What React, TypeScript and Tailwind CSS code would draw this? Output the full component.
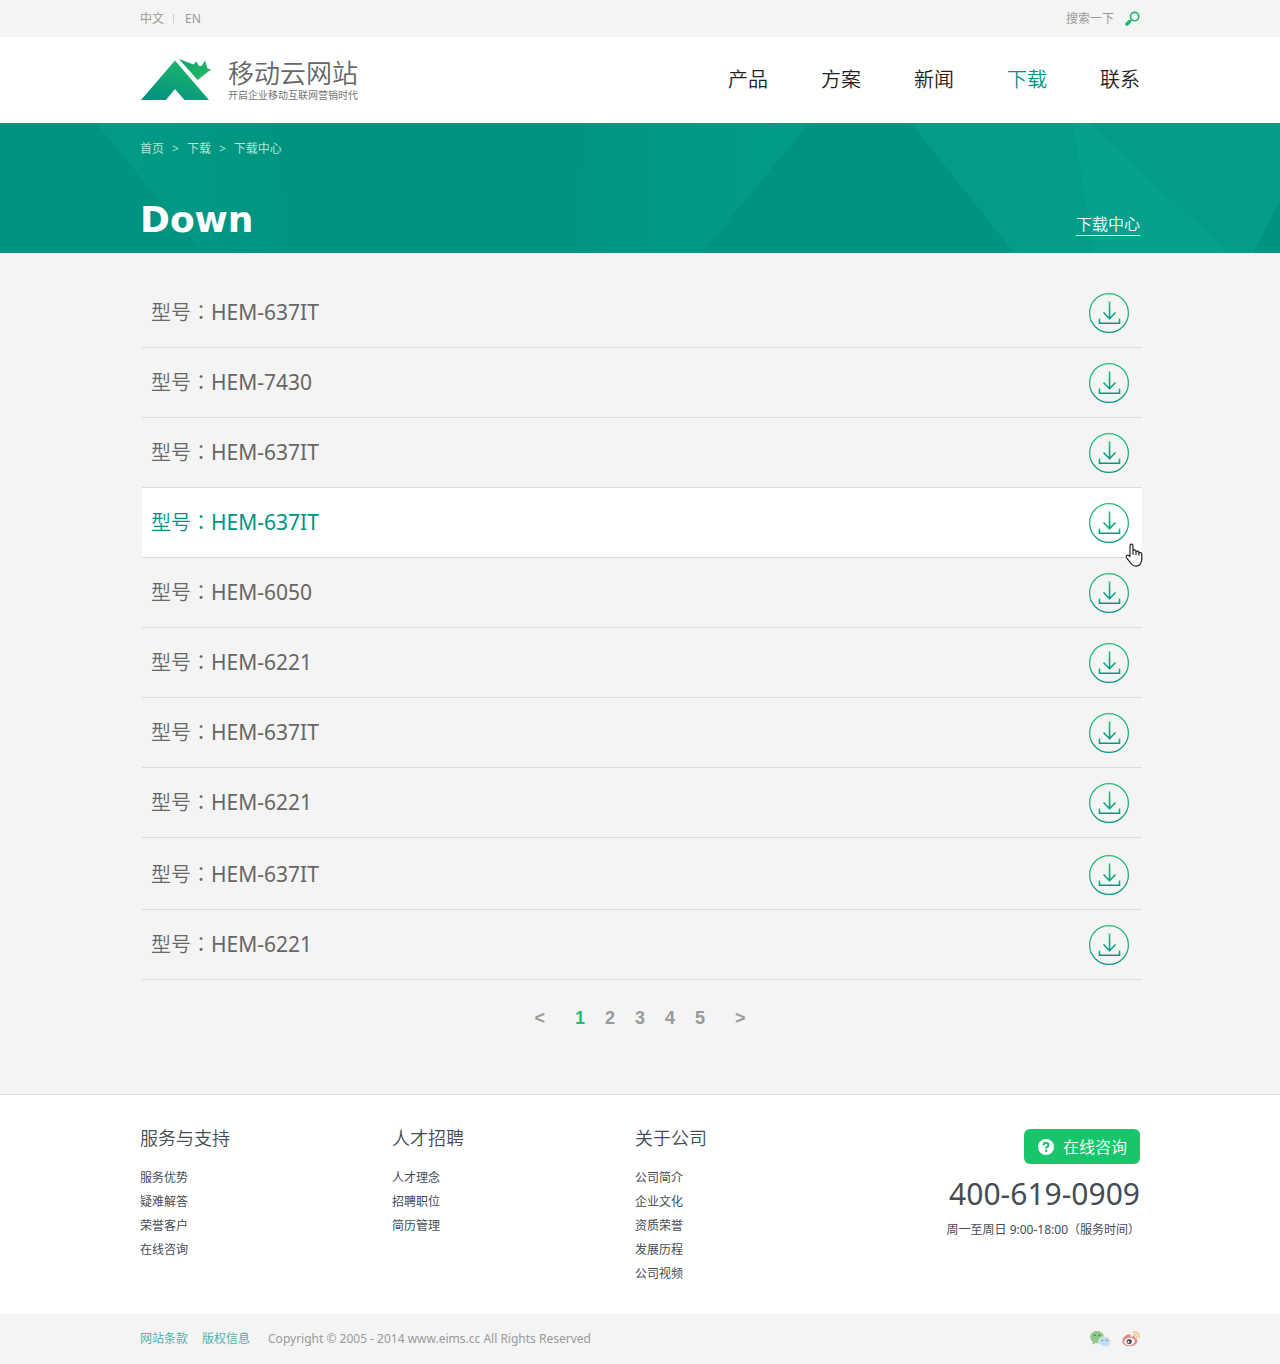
import { useState } from "react";

const navItems = ["产品", "方案", "新闻", "下载", "联系"];

const models = [
  "HEM-637IT",
  "HEM-7430",
  "HEM-637IT",
  "HEM-637IT",
  "HEM-6050",
  "HEM-6221",
  "HEM-637IT",
  "HEM-6221",
  "HEM-637IT",
  "HEM-6221",
];

const footerColumns = [
  { title: "服务与支持", links: ["服务优势", "疑难解答", "荣誉客户", "在线咨询"] },
  { title: "人才招聘", links: ["人才理念", "招聘职位", "简历管理"] },
  { title: "关于公司", links: ["公司简介", "企业文化", "资质荣誉", "发展历程", "公司视频"] },
];

function Logo() {
  return (
    <svg viewBox="0 0 72 44" className="h-11 w-[72px]" aria-hidden="true">
      <defs>
        <linearGradient id="peak" x1="0" y1="1" x2="0.6" y2="0">
          <stop offset="0.1" stopColor="#049180" />
          <stop offset="1" stopColor="#1db56c" />
        </linearGradient>
        <linearGradient id="crown" x1="0" y1="0" x2="1" y2="0.6">
          <stop offset="0" stopColor="#12a070" />
          <stop offset="1" stopColor="#22b962" />
        </linearGradient>
      </defs>
      <path d="M1 42 35 2.500 69 42H44.500L35 31 26 42Z" fill="url(#peak)" />
      <path
        d="M39 1 53.500 6.500 56.500 3.200 58.500 7.800 61.500 8 65 2.500 67.500 10.500 71 11.500 57.500 22Z"
        fill="url(#crown)"
      />
    </svg>
  );
}

function SearchIcon() {
  return (
    <svg viewBox="0 0 16 16" className="h-4 w-4" fill="none" stroke="#1fb86c" aria-hidden="true">
      <circle cx="10.600" cy="5.600" r="4.200" strokeWidth="1.600" />
      <path d="M7.600 8.700 5.800 10.400" strokeWidth="1.400" />
      <path d="M5.400 10.700 3 13" strokeWidth="3.600" strokeLinecap="round" />
    </svg>
  );
}

function BannerShapes() {
  return (
    <svg
      viewBox="0 0 1280 130"
      preserveAspectRatio="none"
      className="absolute inset-0 h-full w-full"
      aria-hidden="true"
    >
      <defs>
        <linearGradient id="fadeOut" x1="0" y1="0" x2="1" y2="0">
          <stop offset="0.2" stopColor="#009a85" />
          <stop offset="1" stopColor="#009480" />
        </linearGradient>
        <linearGradient id="fadeIn" x1="0" y1="0" x2="1" y2="0">
          <stop offset="0" stopColor="#009480" />
          <stop offset="1" stopColor="#009c87" />
        </linearGradient>
      </defs>
      <path d="M96 0H270L300 130 197 123Z" fill="url(#fadeOut)" />
      <path d="M590 0H809L701 130H560Z" fill="url(#fadeIn)" />
      <path d="M911 0H1280V130H1014Z" fill="#039c87" />
      <path d="M1073 0H1090L1228 130H1094Z" fill="#05a18b" />
      <path d="M1280 77V130H1253Z" fill="#009480" />
    </svg>
  );
}

function DownloadIcon() {
  return (
    <svg viewBox="0 0 40 40" className="h-10 w-10" fill="none" aria-hidden="true">
      <defs>
        <linearGradient id="ring" x1="0" y1="0" x2="0" y2="1">
          <stop offset="0" stopColor="#22c070" />
          <stop offset="1" stopColor="#079582" />
        </linearGradient>
      </defs>
      <g stroke="url(#ring)">
        <circle cx="20" cy="20" r="19.400" strokeWidth="1.200" />
        <path d="M20.500 8.500 20.600 25.500M14.500 19.500 20.500 25.700 26.500 19.500" strokeWidth="1.600" />
        <path d="M10.500 25.500V30.300H30.500V25.500" strokeWidth="1.600" />
      </g>
    </svg>
  );
}

function HandPointer() {
  return (
    <svg viewBox="0 0 18 24" className="absolute top-[55px] -right-px h-6 w-[18px]" aria-hidden="true">
      <path
        d="M5 13.500V2.700C5 .7 8 .7 8 2.700V7.500C8.300 6.300 11 6.600 11 8.200V8.800C11.400 7.600 13.900 7.900 13.900 9.500V10C14.300 9 16.800 9.300 16.800 11V16C16.800 19 15.500 20 15 21.500 13.200 23.600 8.500 23.600 7 21.500 5.600 19.500 3.200 17.500 1.300 14.300 .7 12.800 2.400 11.600 3.800 12.600Z"
        fill="#fff"
        stroke="#222"
        strokeWidth="1.200"
        strokeLinejoin="round"
      />
      <path d="M8 7.500V11.800M11 8.500V12M13.900 9.500V12.500" stroke="#222" strokeWidth="1.200" />
    </svg>
  );
}

function HelpIcon() {
  return (
    <svg viewBox="0 0 16 16" className="h-4 w-4" fill="none" aria-hidden="true">
      <circle cx="8" cy="8" r="8" fill="#fff" />
      <path d="M5.500 6.300C5.500 3.100 10.500 3.200 10.500 6.100 10.500 7.800 8.100 7.700 8.100 9.600" stroke="#19c56b" strokeWidth="2.200" />
      <path d="M7 10.600H9.200V12.800H7Z" fill="#19c56b" />
    </svg>
  );
}

function WechatIcon() {
  return (
    <svg viewBox="0 0 22 18" className="h-[18px] w-[22px]" aria-hidden="true">
      <path d="M7 1C3 1 .2 3.600 .2 7 .2 9 1.200 10.600 2.700 11.700L2.200 14.800 5.300 13C10.500 14.100 14 11 14 7 14 3.600 11 1 7 1Z" fill="#8fc98a" />
      <circle cx="4.700" cy="5.300" r="0.900" fill="#4a6e50" />
      <circle cx="9.500" cy="5.300" r="0.900" fill="#4a6e50" />
      <path d="M14.500 6.500C11.300 6.500 8.600 8.700 8.600 11.500 8.600 15 12.500 17 16.100 16.200L18.800 17.500 18.400 15.200C19.800 14.300 20.700 13 20.700 11.500 20.700 8.700 18 6.500 14.500 6.500Z" fill="#c5dcee" stroke="#f4f4f4" strokeWidth="0.600" />
      <circle cx="12.300" cy="10.300" r="0.800" fill="#66809a" />
      <circle cx="16.700" cy="10.300" r="0.800" fill="#66809a" />
    </svg>
  );
}

function WeiboIcon() {
  return (
    <svg viewBox="0 0 18 16" className="h-4 w-[18px]" fill="none" aria-hidden="true">
      <path d="M6.600 3.200C4 3.300 .4 7 .4 10.200 .4 13.300 4 15.200 7.700 15.200 12.300 15.200 15.500 12.600 15.500 10.100 15.500 8.500 14.400 7.700 13.200 7.500 13.700 5.400 12 4.700 8.700 5.900 9 4.500 8.400 3.200 6.600 3.200Z" fill="#e2858a" />
      <ellipse cx="7.500" cy="10.500" rx="5.300" ry="3.700" fill="#fff" transform="rotate(-8 7.500 10.500)" />
      <circle cx="7.200" cy="10.600" r="2.700" fill="#555" />
      <circle cx="6.400" cy="11" r="0.900" fill="#fff" />
      <path d="M11.500 1.200C15 .4 17.700 3 16.800 6.600M11.800 3.700C13.600 3.300 14.900 4.600 14.500 6.300" stroke="#f0bd85" strokeWidth="1.400" strokeLinecap="round" />
    </svg>
  );
}

export default function App() {
  const [page, setPage] = useState(1);

  return (
    <div className="bg-[#f4f4f4] font-['Noto_Sans','Noto_Sans_CJK_SC',sans-serif] text-xs text-[#444c54]">
      <div className="mx-auto flex h-[37px] max-w-[1000px] items-center justify-between text-[#999]">
        <div className="flex items-center">
          <a href="#zh">中文</a>
          <span className="mr-[11px] ml-[9px] h-[9px] w-px bg-[#ccc]" />
          <a href="#en">EN</a>
        </div>
        <form className="flex items-center gap-2" onSubmit={(e) => e.preventDefault()}>
          <input
            type="text"
            aria-label="搜索"
            placeholder="搜索一下"
            className="w-[50px] bg-transparent outline-none placeholder:text-[#999]"
          />
          <button type="submit" aria-label="搜索">
            <SearchIcon />
          </button>
        </form>
      </div>

      <header className="bg-white">
        <div className="mx-auto flex h-[86px] max-w-[1000px] items-center justify-between">
          <a href="#home" className="flex items-center gap-4">
            <Logo />
            <span className="flex flex-col pt-0.5 font-['Liberation_Sans','Noto_Sans_CJK_SC',sans-serif] text-[#666]">
              <span className="text-[26px] leading-[30px] font-[350]">移动云网站</span>
              <span className="text-[10px] leading-[14px] text-[#777]">开启企业移动互联网营销时代</span>
            </span>
          </a>
          <nav className="flex gap-[53px] text-xl font-[350] text-[#222]">
            {navItems.map((item) => (
              <a key={item} href={`#${item}`} className={item === "下载" ? "text-[#009480]" : ""}>
                {item}
              </a>
            ))}
          </nav>
        </div>
      </header>

      <section className="relative bg-[#009480] text-white">
        <BannerShapes />
        <div className="relative mx-auto flex h-[130px] max-w-[1000px] flex-col justify-between pt-[18px] pb-[11px]">
          <nav aria-label="面包屑" className="flex gap-2 text-[#b5e3d9]">
            <a href="#home">首页</a>
            <span>&gt;</span>
            <a href="#down">下载</a>
            <span>&gt;</span>
            <a href="#center">下载中心</a>
          </nav>
          <div className="flex items-end justify-between">
            <h1 className="font-['DejaVu_Sans'] text-4xl leading-[44px] font-bold">Down</h1>
            <a href="#center" className="mb-1.5 border-b border-white text-base leading-[22px] font-[350]">
              下载中心
            </a>
          </div>
        </div>
      </section>

      <main className="pt-[25px] pb-[63px]">
        <ul className="mx-auto max-w-[1004px] pl-1">
          {models.map((model, i) => {
            const active = i === 3;
            return (
              <li
                key={i}
                className={`relative flex items-center justify-between border-b border-[#dcdcdc] pr-[13px] pl-[9px] ${
                  i === 8 ? "h-[72px] pt-0.5" : "h-[70px]"
                } ${active ? "bg-white text-[#009480]" : "text-[#666]"}`}
              >
                <a href={`#${model}-${i}`} className="text-xl font-[350]">
                  型号
                  <span className="font-['Noto_Sans_CJK_TC']">：</span>
                  <span className="text-[21px] font-normal">{model}</span>
                </a>
                <button type="button" aria-label={`下载 ${model}`}>
                  <DownloadIcon />
                </button>
                {active && <HandPointer />}
              </li>
            );
          })}
        </ul>
        <nav
          aria-label="分页"
          className="mt-[25px] flex justify-center gap-5 font-['Liberation_Sans'] text-lg leading-[26px] font-bold text-[#999]"
        >
          <button type="button" className="mr-2.5" onClick={() => setPage(Math.max(1, page - 1))}>
            &lt;
          </button>
          {[1, 2, 3, 4, 5].map((n) => (
            <button
              key={n}
              type="button"
              onClick={() => setPage(n)}
              className={n === page ? "text-[#1fc274]" : ""}
            >
              {n}
            </button>
          ))}
          <button type="button" className="ml-2.5" onClick={() => setPage(Math.min(5, page + 1))}>
            &gt;
          </button>
        </nav>
      </main>

      <footer>
        <div className="border-t border-[#dcdcdc] bg-white">
          <div className="mx-auto grid max-w-[1000px] grid-cols-[252px_243px_1fr_auto] pt-[30px] pb-7">
            {footerColumns.map((column) => (
              <section key={column.title}>
                <h2 className="mb-[15px] text-lg leading-[26px] font-[350]">{column.title}</h2>
                <ul className="leading-6">
                  {column.links.map((link) => (
                    <li key={link}>
                      <a href={`#${link}`}>{link}</a>
                    </li>
                  ))}
                </ul>
              </section>
            ))}
            <div className="flex flex-col items-end pt-1">
              <button
                type="button"
                className="flex h-[35px] items-center gap-[9px] rounded-md bg-[#19c56b] pr-[13px] pl-[14px] text-base font-[350] text-white"
              >
                <HelpIcon />
                在线咨询
              </button>
              <p className="mt-[10px] text-3xl leading-10">400-619-0909</p>
              <p className="mt-1 leading-6">周一至周日 9:00-18:00（服务时间）</p>
            </div>
          </div>
        </div>
        <div className="mx-auto flex h-[50px] max-w-[1000px] items-center justify-between text-[#999]">
          <div className="flex items-center">
            <a href="#terms" className="mr-[14px] text-[#4db3a3]">
              网站条款
            </a>
            <a href="#copyright" className="mr-[18px] text-[#4db3a3]">
              版权信息
            </a>
            <span>Copyright © 2005 - 2014 www.eims.cc All Rights Reserved</span>
          </div>
          <div className="flex items-center gap-[10px]">
            <a href="#wechat" aria-label="微信">
              <WechatIcon />
            </a>
            <a href="#weibo" aria-label="微博">
              <WeiboIcon />
            </a>
          </div>
        </div>
      </footer>
    </div>
  );
}
